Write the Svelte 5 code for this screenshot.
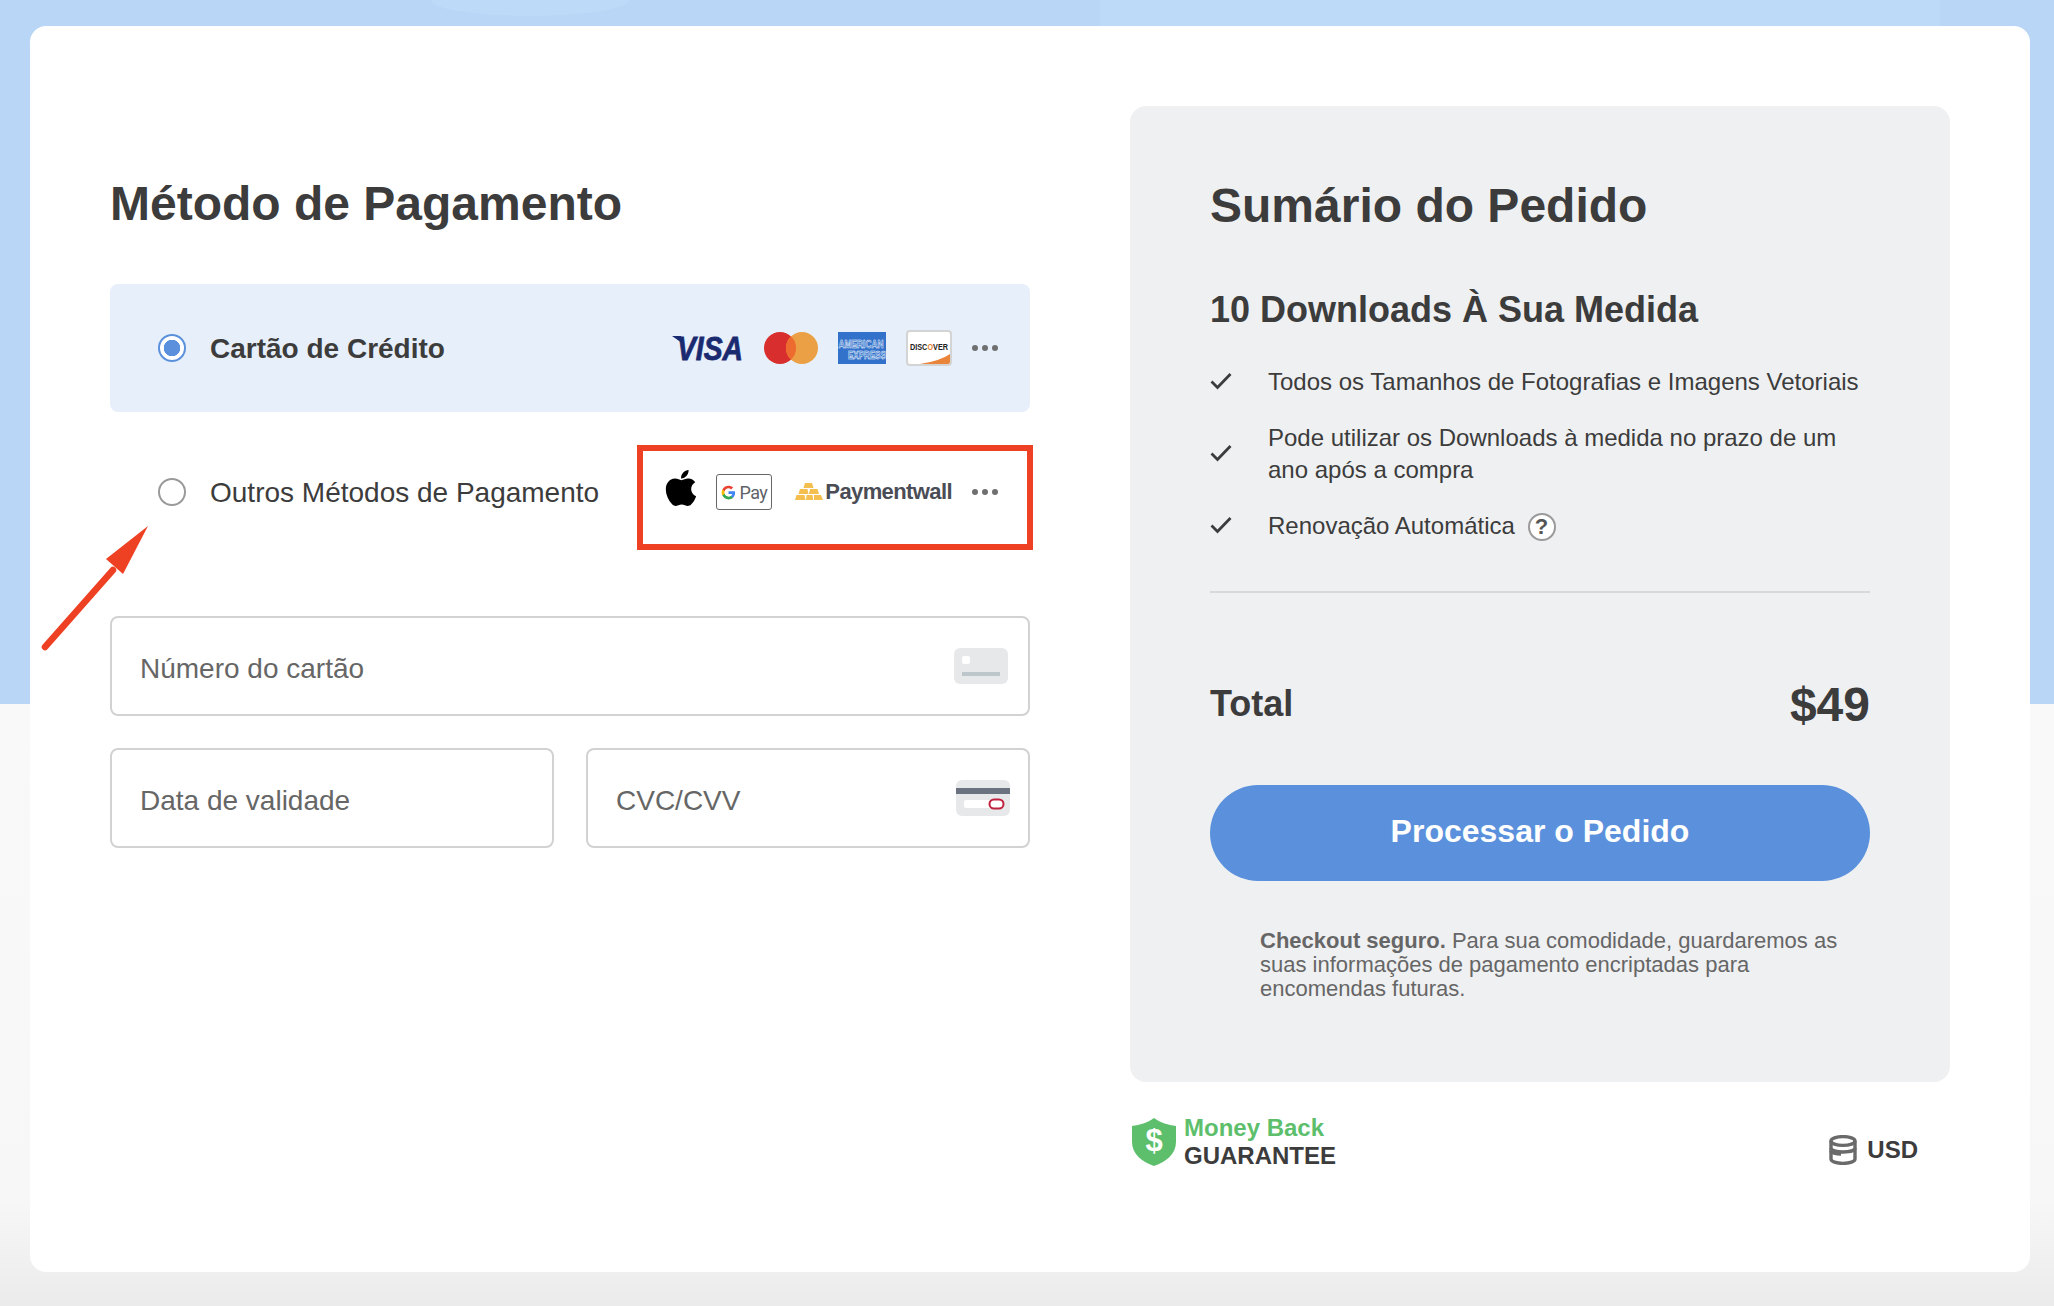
<script>
  const perks = [
    "Todos os Tamanhos de Fotografias e Imagens Vetoriais",
    "Pode utilizar os Downloads à medida no prazo de um ano após a compra",
    "Renovação Automática",
  ];
</script>

<div class="page">
  <main class="card">
    <section class="payment">
      <h1>Método de Pagamento</h1>

      <div class="option selected">
        <span class="radio on"></span>
        <span class="option-label strong">Cartão de Crédito</span>
        <div class="logos">
          <svg width="72" height="26" viewBox="0 0 72 26">
            <path d="M0 1h9l1 7z" fill="#1a2a70" />
            <text x="71" y="24.5" text-anchor="end" class="visa" textLength="66" lengthAdjust="spacingAndGlyphs">VISA</text>
          </svg>
          <svg width="54" height="32" viewBox="0 0 54 32">
            <circle cx="16" cy="16" r="16" fill="#d92e2e" />
            <circle cx="38" cy="16" r="16" fill="#eba046" />
            <path d="M27 4.3a16 16 0 0 1 0 23.4a16 16 0 0 1 0-23.4z" fill="#ee6b30" />
          </svg>
          <svg width="48" height="32" viewBox="0 0 48 32">
            <rect width="48" height="32" fill="#3272cb" />
            <text x="0.5" y="16" class="amex" textLength="45" lengthAdjust="spacingAndGlyphs">AMERICAN</text>
            <text x="10" y="27" class="amex" textLength="38" lengthAdjust="spacingAndGlyphs">EXPRESS</text>
          </svg>
          <svg width="46" height="36" viewBox="0 0 46 36">
            <rect x="1" y="1" width="44" height="34" rx="3" fill="#fff" stroke="#d4d4d4" stroke-width="2" />
            <path d="M14 34 Q34 31 44 24V32a2 2 0 0 1-2 2z" fill="#e8853a" />
            <text x="23" y="20" text-anchor="middle" class="discover" textLength="38" lengthAdjust="spacingAndGlyphs">DISC<tspan fill="#e8853a">O</tspan>VER</text>
          </svg>
          <span class="dots"><i></i><i></i><i></i></span>
        </div>
      </div>

      <div class="option other">
        <span class="radio"></span>
        <span class="option-label">Outros Métodos de Pagamento</span>
        <div class="logos alt">
          <svg class="apple" width="32" height="37" viewBox="3.5 3 16 18.5">
            <path d="M17.05 20.28c-.98.95-2.05.8-3.08.35-1.09-.46-2.09-.48-3.24 0-1.44.62-2.2.44-3.06-.35C2.79 15.25 3.51 7.59 9.05 7.31c1.35.07 2.29.74 3.08.8 1.18-.24 2.31-.93 3.57-.84 1.51.12 2.65.72 3.4 1.8-3.12 1.87-2.38 5.98.48 7.13-.57 1.5-1.31 2.99-2.54 4.09zM12.03 7.25c-.15-2.23 1.66-4.07 3.74-4.25.29 2.58-2.34 4.5-3.74 4.25z" fill="#000" />
          </svg>
          <span class="gpay">
            <svg width="15" height="15" viewBox="0 0 24 24">
              <path d="M22.56 12.25c0-.78-.07-1.53-.2-2.25H12v4.26h5.92c-.26 1.37-1.04 2.53-2.21 3.31v2.77h3.57c2.08-1.92 3.28-4.74 3.28-8.09z" fill="#4285f4" />
              <path d="M12 23c2.97 0 5.46-.98 7.28-2.66l-3.57-2.77c-.98.66-2.23 1.06-3.71 1.06-2.86 0-5.29-1.93-6.16-4.53H2.18v2.84C3.99 20.53 7.7 23 12 23z" fill="#34a853" />
              <path d="M5.84 14.09c-.22-.66-.35-1.36-.35-2.09s.13-1.43.35-2.09V7.07H2.18C1.43 8.55 1 10.22 1 12s.43 3.45 1.18 4.93l3.66-2.84z" fill="#fbbc05" />
              <path d="M12 5.38c1.62 0 3.06.56 4.21 1.64l3.15-3.15C17.45 2.09 14.97 1 12 1 7.7 1 3.99 3.47 2.18 7.07l3.66 2.84c.87-2.6 3.3-4.53 6.16-4.53z" fill="#ea4335" />
            </svg>
            Pay
          </span>
          <span class="paymentwall">
            <svg width="28" height="18" viewBox="0 0 28 18">
              <g fill="#f4bf4f">
                <path d="M10 0h7l1.5 5h-10z" />
                <path d="M5 6h7.5l1 5H3.5z" />
                <path d="M15 6h7.5l1.5 5H14z" />
                <path d="M1.5 12h8l1 5H0z" />
                <path d="M11.5 12h6l.6 5h-7z" />
                <path d="M19 12h7l2 5h-9z" />
              </g>
            </svg>
            Paymentwall
          </span>
          <span class="dots"><i></i><i></i><i></i></span>
        </div>
      </div>

      <form class="fields">
        <div class="field wide">
          <span>Número do cartão</span>
          <svg width="54" height="36" viewBox="0 0 54 36">
            <rect width="54" height="36" rx="6" fill="#e7e8ea" />
            <rect x="8" y="8" width="8" height="8" rx="2" fill="#fff" />
            <rect x="8" y="24" width="38" height="4" fill="#bcc6cb" />
          </svg>
        </div>
        <div class="field">
          <span>Data de validade</span>
        </div>
        <div class="field cvc">
          <span>CVC/CVV</span>
          <svg width="54" height="36" viewBox="0 0 54 36">
            <rect width="54" height="36" rx="6" fill="#e7e8ea" />
            <rect y="8" width="54" height="6" fill="#6c7380" />
            <rect x="8" y="20" width="38" height="8" rx="2" fill="#fff" />
            <rect x="33.5" y="19.5" width="14" height="9" rx="4.5" fill="#fff" stroke="#c0213f" stroke-width="2" />
          </svg>
        </div>
      </form>
    </section>

    <aside class="side">
      <div class="summary">
        <h2>Sumário do Pedido</h2>
        <h3>10 Downloads À Sua Medida</h3>
        <ul>
          {#each perks as perk, i}
            <li>
              <svg width="22" height="18" viewBox="0 0 22 18">
                <path d="M1.5 9.5l6 6L20.5 2" fill="none" stroke="#3c3c3c" stroke-width="2.8" />
              </svg>
              <span>
                {perk}
                {#if i === 2}<b class="help">?</b>{/if}
              </span>
            </li>
          {/each}
        </ul>
        <hr />
        <div class="total">
          <span>Total</span>
          <strong>$49</strong>
        </div>
        <button type="button">Processar o Pedido</button>
        <p class="note"><b>Checkout seguro.</b> Para sua comodidade, guardaremos as suas informações de pagamento encriptadas para encomendas futuras.</p>
      </div>

      <div class="foot">
        <div class="guarantee">
          <svg width="46" height="48" viewBox="0 0 46 48">
            <path d="M23 0 C30 5 37 7 45 8 V24 C45 36 35 44 23 48 C11 44 1 36 1 24 V8 C9 7 16 5 23 0z" fill="#5dbf6c" />
            <text x="23" y="33" text-anchor="middle" class="dollar">$</text>
          </svg>
          <div class="guarantee-text">
            <span class="money">Money Back</span>
            <span class="word">GUARANTEE</span>
          </div>
        </div>
        <div class="currency">
          <svg width="28" height="30" viewBox="0 0 28 30">
            <g fill="none" stroke="#6a6a6a" stroke-width="3.4">
              <ellipse cx="14" cy="6" rx="12" ry="4.4" />
              <path d="M2 6v18c0 2.6 5.4 4.4 12 4.4s12-1.8 12-4.4V6" />
              <path d="M2 13c0 2.4 5.4 4 12 4h-4M26 13c0 2.4-5.4 4-12 4M2 16c0 1.6 5 3 10 3" />
            </g>
          </svg>
          <span>USD</span>
        </div>
      </div>
    </aside>
  </main>

  <div class="highlight"></div>
  <svg class="arrow" width="160" height="140" viewBox="0 0 160 140">
    <path d="M4 127 L72 50" stroke="#ee4023" stroke-width="6.5" stroke-linecap="round" fill="none" />
    <path d="M107 6 L82 54 L65 39z" fill="#ee4023" />
  </svg>
</div>

<style>
  :global(body) {
    margin: 0;
  }

  .page {
    position: relative;
    height: 1306px;
    box-sizing: border-box;
    padding: 26px 24px 34px 30px;
    overflow: hidden;
    font-family: "Liberation Sans", Arial, sans-serif;
    color: #3c3c3c;
    background:
      radial-gradient(ellipse 100px 16px at 530px 0, #bddaf8 98%, transparent),
      linear-gradient(#bddaf9, #bddaf9) 1100px 0 / 840px 26px no-repeat,
      linear-gradient(#b9d6f6 704px, transparent 704px),
      linear-gradient(#f9f9f9 704px, #f7f7f7 1200px, #ebebeb);
  }

  .card {
    box-sizing: border-box;
    height: 1246px;
    display: grid;
    grid-template-columns: 920px 820px;
    column-gap: 100px;
    padding: 80px;
    background: #fff;
    border-radius: 16px;
  }

  h1,
  h2,
  h3 {
    margin: 0;
    font-weight: 700;
  }

  h1 {
    margin: 70px 0 52px;
    font-size: 48px;
    line-height: 56px;
  }

  .option {
    display: flex;
    align-items: center;
    height: 128px;
    padding: 0 32px 0 48px;
    box-sizing: border-box;
    border-radius: 8px;
  }

  .selected {
    background: #e7f0fa;
  }

  .other {
    margin-top: 16px;
  }

  .radio {
    box-sizing: border-box;
    width: 28px;
    height: 28px;
    border: 2px solid #9a9a9a;
    border-radius: 50%;
    background: #fff;
    flex: none;
  }

  .radio.on {
    border-color: #5b91dc;
    background: radial-gradient(circle, #5b91dc 8px, #fff 8.5px);
  }

  .option-label {
    margin: 1px 0 -1px 24px;
    font-size: 28px;
  }

  .strong {
    font-weight: 700;
  }

  .logos {
    margin-left: auto;
    display: flex;
    align-items: center;
    gap: 20px;
  }

  .logos svg {
    display: block;
  }

  .visa {
    font: italic 700 33px "Liberation Sans", sans-serif;
    fill: #1a2a70;
    stroke: #1a2a70;
    stroke-width: 0.8;
  }

  .amex {
    font: 700 11px "Liberation Sans", sans-serif;
    fill: #3272cb;
    stroke: #fff;
    stroke-width: 0.5;
  }

  .discover {
    font: 700 8.5px "Liberation Sans", sans-serif;
    fill: #222;
  }

  .dots {
    display: flex;
    gap: 4px;
  }

  .dots i {
    width: 6px;
    height: 6px;
    border-radius: 50%;
    background: #6f6f6f;
  }

  .alt {
    gap: 0;
  }

  .apple {
    margin: -8px 20px 0 0;
  }

  .gpay {
    box-sizing: border-box;
    width: 56px;
    height: 36px;
    display: flex;
    align-items: center;
    justify-content: center;
    gap: 3px;
    border: 1.5px solid #666;
    border-radius: 3px;
    font: 400 18px Roboto, sans-serif;
    letter-spacing: -0.6px;
    color: #5f6368;
  }

  .paymentwall {
    display: flex;
    align-items: center;
    gap: 2px;
    margin: 0 20px 0 23px;
    font-size: 22px;
    font-weight: 700;
    letter-spacing: -0.6px;
    color: #4a4d55;
  }

  .fields {
    display: grid;
    grid-template-columns: 444px 444px;
    gap: 32px;
    margin-top: 60px;
  }

  .field {
    box-sizing: border-box;
    height: 100px;
    display: flex;
    align-items: center;
    justify-content: space-between;
    padding: 0 20px 0 28px;
    border: 2px solid #d2d2d2;
    border-radius: 8px;
    font-size: 28px;
    color: #666;
  }

  .field span {
    margin: 3px 0 -3px;
  }

  .cvc {
    padding-right: 18px;
  }

  .wide {
    grid-column: 1 / -1;
  }

  .side {
    display: flex;
    flex-direction: column;
  }

  .summary {
    box-sizing: border-box;
    height: 976px;
    padding: 72px 80px 0;
    background: #eff0f2;
    border-radius: 16px;
  }

  h2 {
    font-size: 48px;
    line-height: 56px;
  }

  h3 {
    margin-top: 56px;
    font-size: 36px;
    line-height: 40px;
  }

  ul {
    list-style: none;
    margin: 35px 0 0;
    padding: 0;
    display: flex;
    flex-direction: column;
    gap: 24px;
  }

  li {
    display: flex;
    align-items: center;
    gap: 36px;
    font-size: 24px;
    line-height: 32px;
  }

  li svg {
    flex: none;
  }

  li span {
    margin: 1px 0 -1px;
  }

  .help {
    display: inline-block;
    box-sizing: border-box;
    width: 28px;
    height: 28px;
    margin-left: 6px;
    border: 2px solid #9a9a9a;
    border-radius: 50%;
    background: #fff;
    font-size: 22px;
    line-height: 24px;
    text-align: center;
    vertical-align: 0;
    color: #555;
  }

  hr {
    margin: 50px 0 0;
    border: 0;
    border-top: 2px solid #d8d9db;
  }

  .total {
    display: flex;
    justify-content: space-between;
    align-items: center;
    margin-top: 86px;
    height: 50px;
    font-weight: 700;
    font-size: 36px;
  }

  .total strong {
    font-size: 48px;
  }

  button {
    display: block;
    width: 100%;
    height: 96px;
    margin-top: 56px;
    padding: 0 0 3px;
    border: 0;
    border-radius: 48px;
    background: #5b91dc;
    color: #fff;
    font: 700 32px "Liberation Sans", sans-serif;
  }

  .note {
    margin: 48px 0 0;
    padding: 0 20px 0 50px;
    font-size: 22px;
    line-height: 24px;
    color: #666;
  }

  .foot {
    display: flex;
    justify-content: space-between;
    align-items: center;
    margin-top: 32px;
    padding: 0 32px 0 1px;
  }

  .guarantee {
    display: flex;
    align-items: center;
    gap: 7px;
  }

  .dollar {
    font: 700 31px "Liberation Sans", sans-serif;
    fill: #fff;
  }

  .guarantee-text {
    display: flex;
    flex-direction: column;
    font-weight: 700;
    line-height: 28px;
  }

  .money {
    font-size: 24px;
    color: #5dbf6c;
  }

  .word {
    font-size: 24px;
  }

  .currency {
    display: flex;
    align-items: center;
    gap: 10px;
    margin-top: 16px;
    font-size: 24px;
    font-weight: 700;
  }

  .highlight {
    position: absolute;
    left: 637px;
    top: 445px;
    width: 396px;
    height: 105px;
    box-sizing: border-box;
    border: 6px solid #ee4023;
  }

  .arrow {
    position: absolute;
    left: 41px;
    top: 520px;
  }
</style>
